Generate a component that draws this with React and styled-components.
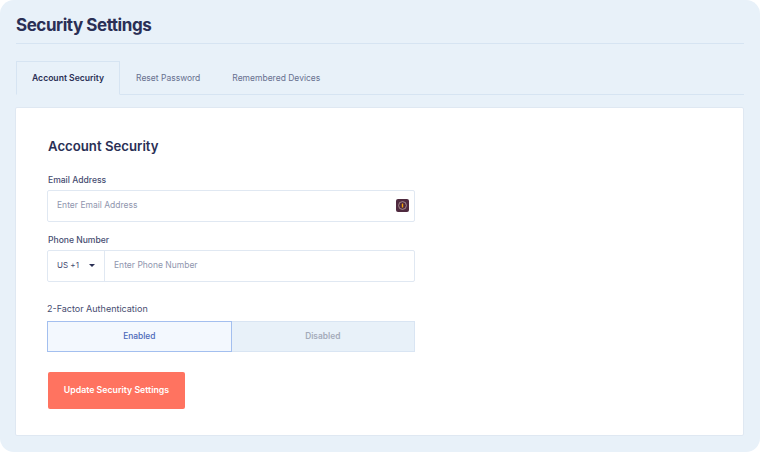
import React from "react";
import styled, { createGlobalStyle } from "styled-components";

const Global = createGlobalStyle`
  html, body { margin: 0; padding: 0; background: #fff; }
  body { font-family: Inter, "Liberation Sans", sans-serif; -webkit-font-smoothing: antialiased; }
`;
const Page = styled.div`
  width: 760px; height: 452px; box-sizing: border-box; background: #e8f1f9;
  border-radius: 14px; padding: 0 16px 16px 15px; display: flex; flex-direction: column; overflow: hidden;
`;
const Header = styled.header`
  height: 44px; box-sizing: border-box; border-bottom: 1px solid #d6e4f2; margin-left: 1px;
`;
const Title = styled.h1`
  margin: 0; padding-top: 14px; font-size: 17px; line-height: 22px; font-weight: 700; color: #2a2f55; letter-spacing: -0.45px;
`;
const Tabs = styled.nav`
  box-sizing: border-box; margin-top: 17px; height: 34px; display: flex; border-bottom: 1px solid #d6e4f2; margin-left: 1px;
`;
const Tab = styled.div`
  box-sizing: border-box; height: 34px; padding: 0 15px 1px; display: flex; align-items: center;
  font-size: ${p => (p.$active ? 8.6 : 8.5)}px; font-weight: ${p => (p.$active ? 600 : 400)}; color: ${p => (p.$active ? "#2a2f55" : "#67708f")};
  border: 1px solid ${p => (p.$active ? "#d6e4f2" : "transparent")};
  border-bottom: ${p => (p.$active ? "1px solid #e8f1f9" : "none")};
`;
const Card = styled.main`
  margin-top: 12px; flex: 1; background: #fff; border: 1px solid #dfe8f2; border-radius: 2px; padding: 28px 31px 0 31px;
  box-sizing: border-box;
`;
const CardTitle = styled.h2`
  margin: 0 0 0 1px; font-size: 13.2px; line-height: 20px; font-weight: 600; color: #2a2f55;
`;
const Label = styled.label`
  display: block; font-size: ${p => p.$size || 8.55}px; line-height: 11px; font-weight: ${p => p.$weight || 500}; color: #464c70;
  margin: 0 0 ${p => p.$gap || 4}px ${p => p.$indent ?? 1}px;
`;
const Field = styled.div`
  width: 368px; margin-top: ${p => p.$mt}px;
`;
const InputBox = styled.div`
  box-sizing: border-box; width: 368px; height: 32px; border: 1px solid #e0e8f2; border-radius: 2px; display: flex; align-items: center;
  background: #fff;
`;
const Placeholder = styled.span`
  font-size: 8.5px; color: #8f96ae; padding: 0 0 2px ${p => p.$pl}px; flex: 1;
`;
const PasswordIcon = styled.svg`
  width: 13px; height: 13px; margin: 0 5px 1px 0;
`;
const Select = styled.div`
  width: 57px; height: 100%; box-sizing: border-box; border-right: 1px solid #e0e8f2; display: flex; align-items: center;
  justify-content: space-between; padding: 0 9px 2px 9px; font-size: 8px; color: #464c70;
`;
const Caret = styled.span`
  width: 0; height: 0; border-left: 3px solid transparent; border-right: 3px solid transparent; border-top: 3px solid #2a2f55;
`;
const Toggle = styled.div`
  display: flex; width: 368px; height: 31px;
`;
const ToggleOption = styled.div`
  flex: 1; box-sizing: border-box; display: flex; align-items: center; justify-content: center; padding-bottom: 2px;
  font-size: 8.4px; font-weight: ${p => (p.$active ? 500 : 600)};
  color: ${p => (p.$active ? "#4a68b8" : "#a4abba")};
  background: ${p => (p.$active ? "#f3f8fe" : "#e8f1f9")};
  border: 1px solid ${p => (p.$active ? "#a3bfef" : "#d9e5f3")};
  ${p => !p.$active && "border-left: none;"}
`;
const Submit = styled.button`
  display: block; margin: 20px 0 0 1px; width: 137px; height: 37px; background: #ff7360; color: #fff; border: 0; border-radius: 2px;
  font-family: inherit; font-size: 8.75px; font-weight: 600; padding: 0 0 2px;
`;

export default function App() {
  return (
    <Page>
      <Global />
      <Header><Title>Security Settings</Title></Header>
      <Tabs>
        <Tab $active>Account Security</Tab>
        <Tab>Reset Password</Tab>
        <Tab>Remembered Devices</Tab>
      </Tabs>
      <Card>
        <CardTitle>Account Security</CardTitle>
        <Field $mt={19}>
          <Label>Email Address</Label>
          <InputBox>
            <Placeholder $pl={9}>Enter Email Address</Placeholder>
            <PasswordIcon viewBox="0 0 13 13">
              <rect width="13" height="13" rx="2" fill="#4f2a3f" />
              <circle cx="6.5" cy="6.5" r="3.9" fill="none" stroke="#b9a29f" strokeWidth="0.8" />
              <rect x="5.8" y="4.4" width="1.4" height="4.2" rx="0.5" fill="#f5a30c" />
            </PasswordIcon>
          </InputBox>
        </Field>
        <Field $mt={13}>
          <Label>Phone Number</Label>
          <InputBox>
            <Select>US +1<Caret /></Select>
            <Placeholder $pl={9}>Enter Phone Number</Placeholder>
          </InputBox>
        </Field>
        <Field $mt={21}>
          <Label $size={9} $weight={400} $gap={7} $indent={0}>2-Factor Authentication</Label>
          <Toggle>
            <ToggleOption $active>Enabled</ToggleOption>
            <ToggleOption>Disabled</ToggleOption>
          </Toggle>
        </Field>
        <Submit>Update Security Settings</Submit>
      </Card>
    </Page>
  );
}
